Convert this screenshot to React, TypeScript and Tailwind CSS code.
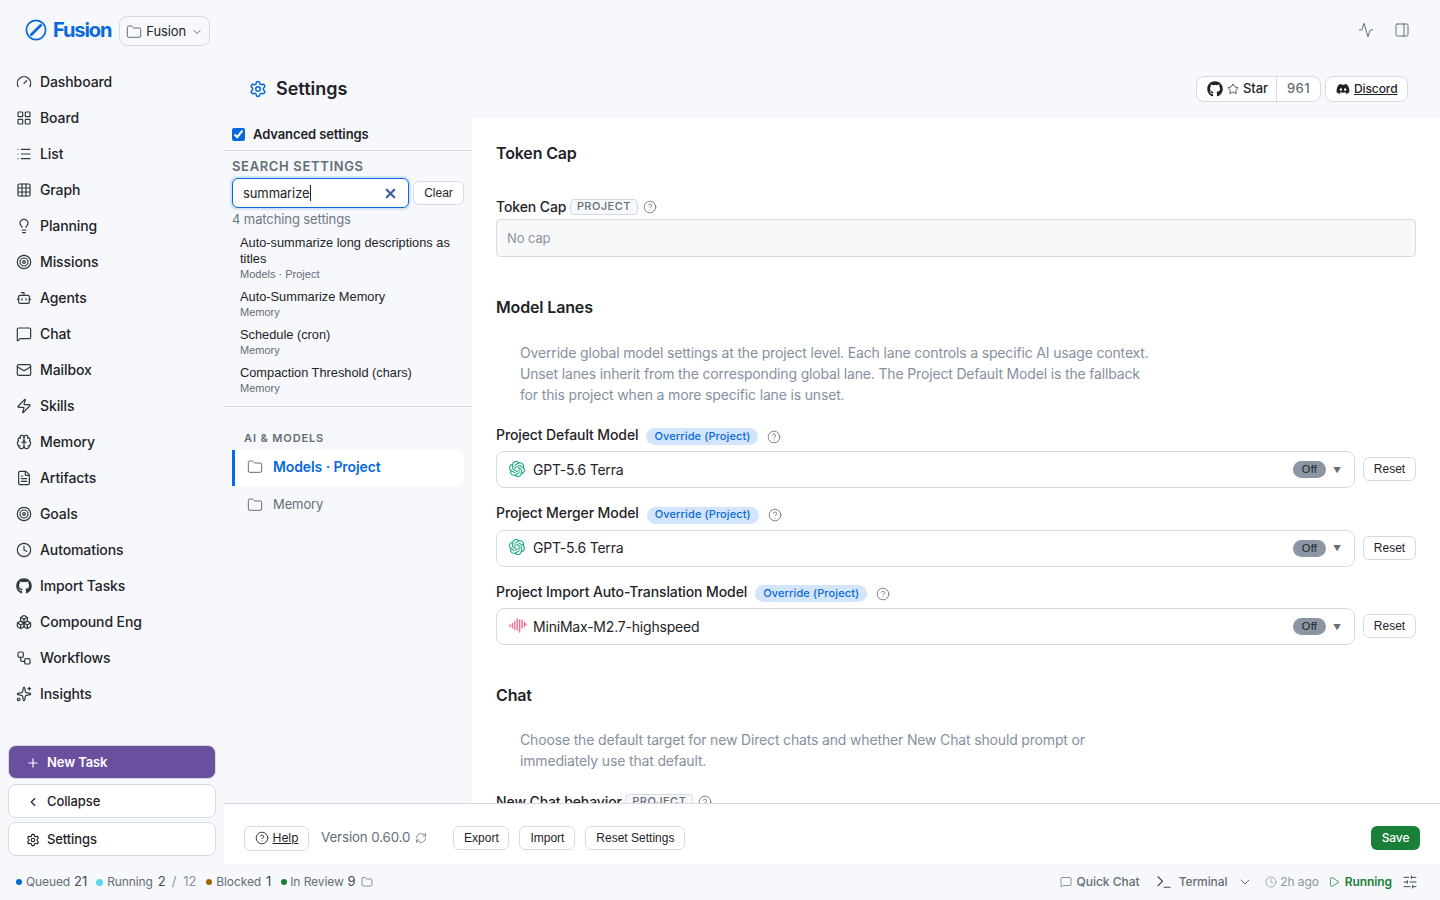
import {
  Activity,
  Bot,
  Boxes,
  Brain,
  ChevronDown,
  ChevronLeft,
  CircleHelp,
  Clock,
  FileText,
  Folder,
  Gauge,
  Grid3x3,
  LayoutGrid,
  Lightbulb,
  List,
  Mail,
  MessageSquare,
  PanelRight,
  Play,
  Plus,
  RefreshCw,
  Settings,
  SlidersHorizontal,
  Sparkles,
  Star,
  Target,
  Terminal,
  Workflow,
  X,
  Zap,
} from "lucide-react";
import { FaDiscord, FaGithub } from "react-icons/fa";
import { SiOpenai } from "react-icons/si";

const navItems = [
  { label: "Dashboard", icon: Gauge },
  { label: "Board", icon: LayoutGrid },
  { label: "List", icon: List },
  { label: "Graph", icon: Grid3x3 },
  { label: "Planning", icon: Lightbulb },
  { label: "Missions", icon: Target },
  { label: "Agents", icon: Bot },
  { label: "Chat", icon: MessageSquare },
  { label: "Mailbox", icon: Mail },
  { label: "Skills", icon: Zap },
  { label: "Memory", icon: Brain },
  { label: "Artifacts", icon: FileText },
  { label: "Goals", icon: Target },
  { label: "Automations", icon: Clock },
  { label: "Import Tasks", icon: FaGithub },
  { label: "Compound Eng", icon: Boxes },
  { label: "Workflows", icon: Workflow },
  { label: "Insights", icon: Sparkles },
];

const searchResults = [
  { title: "Auto-summarize long descriptions as titles", meta: "Models · Project" },
  { title: "Auto-Summarize Memory", meta: "Memory" },
  { title: "Schedule (cron)", meta: "Memory" },
  { title: "Compaction Threshold (chars)", meta: "Memory" },
];

function Logo() {
  return (
    <svg viewBox="0 0 22 22" className="h-[22px] w-[22px] text-[#0969da]" fill="none" stroke="currentColor">
      <circle cx="11" cy="11" r="9.6" strokeWidth="1.7" />
      <path d="M5.5 16.5 16.5 5.5" strokeWidth="2.6" />
    </svg>
  );
}

function MinimaxIcon() {
  return (
    <svg viewBox="0 0 18 16" className="h-4 w-[18px] text-[#ee6f8e]" fill="none" stroke="currentColor" strokeWidth="1.4" strokeLinecap="round">
      <path d="M1 7v1.5M3.4 5.5v4.5M5.8 3.5v8M8.2 1v11M10.6 2v12M13 2v8M15.4 4.5v4M17 6v1" />
    </svg>
  );
}

function SmallButton({ children, className = "" }: { children: React.ReactNode; className?: string }) {
  return (
    <button className={`flex h-6 items-center justify-center rounded-md border border-[#d5dbe5] bg-white font-['Liberation_Sans',sans-serif] text-xs tracking-normal text-[#1f2328] ${className}`}>
      {children}
    </button>
  );
}

function ScopeBadge() {
  return (
    <span className="ml-[3.5px] flex h-4 items-center rounded border border-[#d5dbe5] bg-[#f6f8fa] px-1.5 text-[11px] tracking-[0.04em] text-[#656d76]">
      PROJECT
    </span>
  );
}

function ModelField({ label, model, minimax }: { label: string; model: string; minimax?: boolean }) {
  return (
    <div>
      <div className="flex h-[17px] items-center text-sm font-medium text-[#1f2328]">
        {label}
        <span className="ml-2 flex h-[17px] translate-y-0.5 items-center rounded-full bg-[#d3e5fb] px-2 text-[11px] font-medium tracking-[0.01em] text-[#0969da]">
          Override (Project)
        </span>
        <CircleHelp className="ml-[9px] h-3.5 w-3.5 translate-y-0.5 text-[#6e7781]" strokeWidth={1.5} />
      </div>
      <div className="mt-2 flex items-center gap-2">
        <div className="flex h-[37px] flex-1 items-center rounded-lg border border-[#d5dbe5] bg-white pl-3 pr-[13px]">
          <span className="flex w-6 -translate-y-px items-center">
            {minimax ? <MinimaxIcon /> : <SiOpenai className="h-4 w-4 text-[#10a37f]" />}
          </span>
          <span className="text-sm tracking-[-0.2px] text-[#1f2328]">{model}</span>
          <span className="ml-auto flex h-[17px] w-[33px] items-center justify-center rounded-full bg-[#8b95a3] font-['Liberation_Sans',sans-serif] text-[11px] tracking-[0.03em] text-[#1f2328]">
            Off
          </span>
          <span className="ml-[7px] flex w-2 justify-center text-[8px] text-[#656d76]">▼</span>
        </div>
        <SmallButton className="-mt-px w-[53px]">Reset</SmallButton>
      </div>
    </div>
  );
}

export default function App() {
  return (
    <div className="flex h-screen flex-col overflow-hidden bg-[#f6f8fb] font-['Inter',sans-serif] tracking-[-0.1px] text-[#1f2328]">
      <header className="flex h-[60px] shrink-0 items-center pl-[25px] pr-[30px]">
        <Logo />
        <span className="ml-1.5 text-xl font-bold tracking-[-0.055em] text-[#0969da]">Fusion</span>
        <button className="ml-2 mt-0.5 flex h-[30px] w-[91px] items-center gap-1 rounded-lg border border-[#d5dbe5] pl-1.5 pt-px text-[13px] text-[#1f2328]">
          <Folder className="h-4 w-4 text-[#656d76]" strokeWidth={1.5} />
          Fusion
          <ChevronDown className="ml-px h-3 w-3 text-[#656d76]" />
        </button>
        <Activity className="ml-auto h-4 w-4 text-[#656d76]" strokeWidth={1.5} />
        <PanelRight className="ml-5 h-4 w-4 text-[#656d76]" strokeWidth={1.5} />
      </header>

      <div className="flex min-h-0 flex-1">
        <aside className="flex w-[224px] shrink-0 flex-col justify-between pb-2 pt-1">
          <nav>
            {navItems.map((item) => {
              const Icon = item.icon;
              return (
                <a key={item.label} className="flex h-9 items-center gap-2 pl-4 text-sm font-medium text-[#1f2328]">
                  <Icon className="h-4 w-4 text-[#32383f]" strokeWidth={1.8} />
                  {item.label}
                </a>
              );
            })}
          </nav>
          <div className="flex flex-col gap-1 px-2">
            <button className="mb-px flex h-[34px] items-center gap-[7px] rounded-lg border border-[#d5dbe5] bg-[#6b4f9f] pl-[17px] pt-[2px] text-[13px] font-semibold text-white">
              <Plus className="h-3.5 w-3.5" />
              New Task
            </button>
            <button className="flex h-[34px] items-center gap-[7px] rounded-lg border border-[#d5dbe5] bg-white pl-[17px] pt-[2px] text-[13px] font-medium">
              <ChevronLeft className="h-3.5 w-3.5" />
              Collapse
            </button>
            <button className="flex h-[34px] items-center gap-[7px] rounded-lg border border-[#d5dbe5] bg-white pl-[17px] pt-[2px] text-[13px] font-medium">
              <Settings className="h-3.5 w-3.5" />
              Settings
            </button>
          </div>
        </aside>

        <main className="flex min-w-0 flex-1 flex-col">
          <div className="flex h-[59px] shrink-0 items-center pb-0.5 pl-[25px] pr-8">
            <Settings className="h-[18px] w-[18px] text-[#0969da]" />
            <h1 className="ml-[9px] text-lg font-semibold tracking-normal">Settings</h1>
            <div className="ml-auto flex h-[26px] items-stretch rounded-lg border border-[#d5dbe5] bg-white text-[13px]">
              <span className="flex w-[80px] items-center gap-1 border-r border-[#d5dbe5] pl-2.5 font-medium">
                <FaGithub className="h-4 w-4 shrink-0" />
                <Star className="h-3 w-3 shrink-0" strokeWidth={1.5} />
                Star
              </span>
              <span className="flex w-[43px] items-center justify-center font-medium tracking-[0.03em] text-[#656d76]">961</span>
            </div>
            <a className="ml-1 flex h-[26px] w-[83px] items-center gap-1 rounded-lg border border-[#d5dbe5] bg-white pl-2.5 text-xs font-medium underline">
              <FaDiscord className="h-3.5 w-3.5 shrink-0" />
              Discord
            </a>
          </div>

          <div className="flex min-h-0 flex-1">
            <div className="w-[248px] shrink-0">
              <label className="flex h-8 items-center gap-2 border-b border-[#d5dbe5] pl-2 text-[13px] font-semibold">
                <input type="checkbox" defaultChecked className="h-[13px] w-[13px] accent-[#0969da]" />
                Advanced settings
              </label>
              <div className="border-b border-[#d5dbe5] pb-2.5">
                <div className="px-2 pt-[7px] text-[13px] font-semibold leading-4 tracking-[0.05em] text-[#656d76]">SEARCH SETTINGS</div>
                <div className="mt-1 flex items-center gap-1 px-2">
                  <div className="flex h-[30px] w-[177px] items-center rounded-md border border-[#0969da] bg-white pl-2.5 pr-2.5 text-[13px] shadow-[0_0_0_2px_rgba(9,105,218,0.15)]">
                    <span className="border-r border-[#1f2328] leading-4">summarize</span>
                    <X className="ml-auto h-[15px] w-[15px] text-[#3b5f9b]" strokeWidth={3.5} />
                  </div>
                  <SmallButton className="w-[51px]">Clear</SmallButton>
                </div>
                <div className="mt-0.5 px-2 text-[13px] leading-[18px] text-[#6e7781]">4 matching settings</div>
                <ul className="mt-[7px] flex flex-col gap-[7px] pl-4 pr-3 font-['Liberation_Sans',sans-serif] tracking-normal">
                  {searchResults.map((r) => (
                    <li key={r.title}>
                      <div className="text-[12.8px] leading-4 text-[#1f2328]">{r.title}</div>
                      <div className="-mt-px text-[11px] leading-4 text-[#656d76]">{r.meta}</div>
                    </li>
                  ))}
                </ul>
              </div>
              <div className="mt-[23px] pl-5 text-[11px] font-semibold leading-4 tracking-[0.08em] text-[#656d76]">AI &amp; MODELS</div>
              <div className="ml-2 mr-2 mt-1 flex h-9 items-center gap-2.5 rounded-r-lg border-l-[3px] border-[#0969da] bg-white pb-[2px] pl-3 text-sm font-semibold text-[#0969da]">
                <Folder className="h-4 w-4 text-[#656d76]" strokeWidth={1.5} />
                Models · Project
              </div>
              <div className="mx-2 mt-px flex h-9 items-center gap-2.5 pl-[15px] text-[13px] text-[#656d76]">
                <Folder className="h-4 w-4" strokeWidth={1.5} />
                Memory
              </div>
            </div>

            <section className="min-w-0 flex-1 overflow-hidden bg-white px-6 pt-6">
              <h2 className="text-base font-semibold leading-[20px] tracking-[-0.15px]">Token Cap</h2>
              <div className="mt-[35px] flex h-[17px] items-center text-sm font-medium">
                Token Cap
                <ScopeBadge />
                <CircleHelp className="ml-[5px] h-3.5 w-3.5 text-[#6e7781]" strokeWidth={1.5} />
              </div>
              <div className="mt-1 flex h-[38px] items-center rounded border border-[#d5dbe5] bg-[#f6f8fa] px-2.5 pt-px text-[13px] text-[#8c959f]">No cap</div>

              <h2 className="mt-10 text-base font-semibold leading-[20px] tracking-[-0.15px]">Model Lanes</h2>
              <p className="mt-[25px] w-[656px] pl-6 text-sm leading-[21px] tracking-[-0.16px] text-[#8590a0]">
                Override global model settings at the project level. Each lane controls a specific AI usage context. Unset lanes inherit from the corresponding global lane. The Project Default Model is the fallback for this project when a more specific lane is unset.
              </p>
              <div className="mt-[21px] flex flex-col gap-[16.5px]">
                <ModelField label="Project Default Model" model="GPT-5.6 Terra" />
                <ModelField label="Project Merger Model" model="GPT-5.6 Terra" />
                <ModelField label="Project Import Auto-Translation Model" model="MiniMax-M2.7-highspeed" minimax />
              </div>

              <h2 className="mt-10 text-base font-semibold leading-[20px] tracking-[-0.15px]">Chat</h2>
              <p className="mt-6 w-[656px] pl-6 text-sm leading-[21px] tracking-[-0.16px] text-[#8590a0]">
                Choose the default target for new Direct chats and whether New Chat should prompt or immediately use that default.
              </p>
              <div className="mt-[22px] flex h-[17px] items-center text-sm font-medium">
                New Chat behavior
                <ScopeBadge />
                <CircleHelp className="ml-[5px] h-3.5 w-3.5 text-[#6e7781]" strokeWidth={1.5} />
              </div>
            </section>
          </div>

          <footer className="flex h-[61px] shrink-0 items-center border-t border-[#d5dbe5] bg-white pl-5 pr-5 pt-2">
            <a className="flex h-[25px] w-[65px] items-center justify-center gap-1 rounded-md border border-[#d5dbe5] text-xs underline">
              <CircleHelp className="h-3.5 w-3.5" strokeWidth={1.5} />
              Help
            </a>
            <span className="ml-3 text-[13.3px] text-[#656d76]">Version 0.60.0</span>
            <RefreshCw className="ml-[5px] h-3 w-3 text-[#656d76]" strokeWidth={1.5} />
            <SmallButton className="ml-[26px] w-14">Export</SmallButton>
            <SmallButton className="ml-2.5 w-14">Import</SmallButton>
            <SmallButton className="ml-2.5 w-[100px]">Reset Settings</SmallButton>
            <button className="ml-auto flex h-6 w-[49px] items-center justify-center rounded-md bg-[#1a7f37] text-xs font-medium text-white">Save</button>
          </footer>
        </main>
      </div>

      <div className="flex h-9 shrink-0 items-center pl-4 pr-[22px] text-xs text-[#656d76]">
        <span className="h-1.5 w-1.5 rounded-full bg-[#0969da]" />
        <span className="ml-1">Queued</span>
        <span className="ml-1 text-[13px] text-[#424a53]">21</span>
        <span className="ml-[9px] h-[7px] w-[7px] rounded-full bg-[#5fd5e8]" />
        <span className="ml-1">Running</span>
        <span className="ml-[5px] text-[13px] text-[#424a53]">2</span>
        <span className="ml-1.5 text-[13px] text-[#8c959f]">/</span>
        <span className="ml-[7px] text-[13px] text-[#8c959f]">12</span>
        <span className="ml-2.5 h-1.5 w-1.5 rounded-full bg-[#9a6700]" />
        <span className="ml-1">Blocked</span>
        <span className="ml-[5px] text-[13px] text-[#424a53]">1</span>
        <span className="ml-[10px] h-1.5 w-1.5 rounded-full bg-[#1a7f37]" />
        <span className="ml-[3px]">In Review</span>
        <span className="ml-1 text-[13px] text-[#424a53]">9</span>
        <Folder className="ml-[5px] h-3 w-3" strokeWidth={1.5} />

        <MessageSquare className="ml-auto h-3 w-3" strokeWidth={1.5} />
        <span className="ml-1 font-medium tracking-normal">Quick Chat</span>
        <Terminal className="ml-[15px] h-[18px] w-[18px] text-[#424a53]" strokeWidth={1.5} />
        <span className="ml-1.5 font-medium">Terminal</span>
        <ChevronDown className="ml-2.5 h-4 w-4" strokeWidth={1.5} />
        <Clock className="ml-3 h-3 w-3 text-[#8c959f]" strokeWidth={1.5} />
        <span className="ml-[3px] text-[#8c959f]">2h ago</span>
        <Play className="ml-[9px] h-3 w-3 text-[#1a7f37]" strokeWidth={1.5} />
        <span className="ml-[5px] font-semibold text-[#1a7f37]">Running</span>
        <SlidersHorizontal className="ml-2.5 h-4 w-4 text-[#424a53]" strokeWidth={1.5} />
      </div>
    </div>
  );
}
